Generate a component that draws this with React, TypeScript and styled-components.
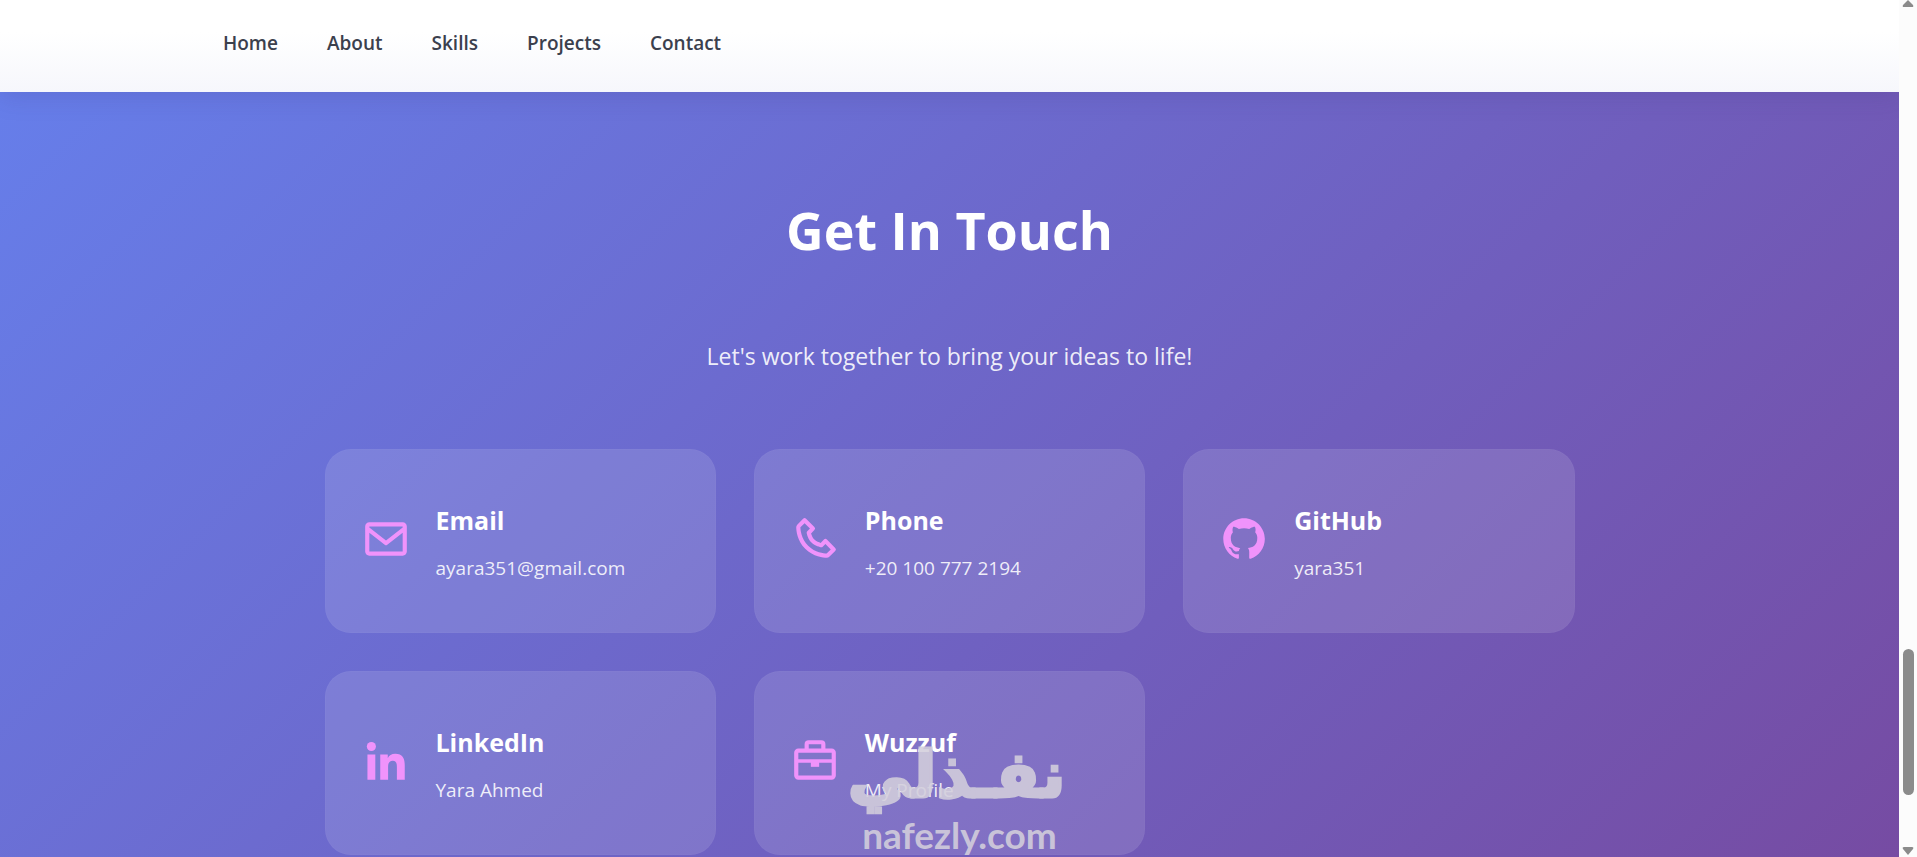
import React from 'react';
import styled, { createGlobalStyle } from 'styled-components';
import { BiEnvelope, BiPhone, BiLogoGithub, BiLogoLinkedin } from 'react-icons/bi';

const GlobalStyle = createGlobalStyle`
  * { box-sizing: border-box; margin: 0; padding: 0; }
  body { font-family: "Segoe UI", "Open Sans", "Noto Sans", sans-serif; color: #2d3142; }
`;

const Shell = styled.div`
  position: relative;
  display: flex;
  height: 100vh;
  overflow: hidden;
  background: #fff;
`;

const Page = styled.div`
  flex: 1;
  min-width: 0;
  display: flex;
  flex-direction: column;
`;

const Header = styled.header`
  position: relative;
  z-index: 1;
  flex: none;
  height: 92px;
  padding: 0 223px;
  background: linear-gradient(#fff 35%, #f6f7fc);
  box-shadow: 0 4px 24px rgba(60, 50, 120, 0.18);
`;

const Nav = styled.nav`
  display: flex;
  gap: 49px;
  padding-top: 30px;
`;

const NavLink = styled.a`
  font-size: 19px;
  line-height: 26px;
  font-weight: 600;
  color: #3b404d;
  text-decoration: none;
`;

const Contact = styled.section`
  flex: 1 0 auto;
  padding: 94px 40px 24px;
  background: linear-gradient(135deg, #667eea, #764ba2);
  color: #fff;
`;

const Title = styled.h2`
  font-size: 52px;
  line-height: 88px;
  font-weight: 700;
  text-align: center;
`;

const Lead = styled.p`
  margin: 62px 0 73px;
  font-size: 23px;
  line-height: 40px;
  text-align: center;
  color: rgba(255, 255, 255, 0.9);
`;

const Grid = styled.div`
  display: grid;
  grid-template-columns: repeat(3, 1fr);
  gap: 38px;
  max-width: 1250px;
  margin: 0 auto;
`;

const Card = styled.a`
  display: flex;
  align-items: center;
  gap: 25px;
  height: 184px;
  padding: 0 35px 4px;
  border: 1px solid rgba(255, 255, 255, 0.02);
  border-radius: 26px;
  background: rgba(255, 255, 255, 0.12);
  color: #fff;
  text-decoration: none;

  svg { flex: none; color: #f093fb; }
`;

const CardBody = styled.div`
  padding-top: 6px;
`;

const CardTitle = styled.h3`
  font-size: 25px;
  line-height: 40px;
  font-weight: 700;
  margin-bottom: 12px;
`;

const CardText = styled.p`
  font-size: 19px;
  line-height: 32px;
  color: rgba(255, 255, 255, 0.88);
`;

const ScrollBar = styled.div`
  flex: none;
  width: 18px;
  display: flex;
  flex-direction: column;
  align-items: center;
  background: #fcfcfc;
  position: relative;
  z-index: 2;
`;

const Gap = styled.div<{ $grow: number }>`
  flex: ${(p) => p.$grow} 0 0;
`;

const Thumb = styled.div`
  flex: 146 0 0;
  width: 11px;
  border-radius: 6px;
  background: #8b8b8b;
`;

const Watermark = styled.div`
  position: absolute;
  z-index: 3;
  left: 50%;
  bottom: 0;
  width: 212px;
  margin-left: -105px;
  color: #d3cfdc;
  opacity: 0.88;
  text-align: center;
  white-space: nowrap;
  pointer-events: none;
`;

const MarkArabic = styled.div`
  font: 700 64px/76px "DejaVu Sans", sans-serif;
  -webkit-text-stroke: 3px #d3cfdc;
`;

const MarkLatin = styled.div`
  font: 700 37px/44px Lato, sans-serif;
`;

function BriefcaseIcon({ size }: { size: number }) {
  return (
    <svg width={size} height={size} viewBox="0 0 24 24" fill="none" stroke="currentColor" strokeWidth="2" strokeLinejoin="round">
      <rect x="3" y="7" width="18" height="13" rx="1" />
      <path d="M8 7V4Q8 3 9 3H15Q16 3 16 4V7" />
      <path d="M3 12H21" strokeWidth="1.6" />
      <path d="M10 12H14V14.8H10Z" fill="currentColor" stroke="none" />
    </svg>
  );
}

const links = ['Home', 'About', 'Skills', 'Projects', 'Contact'];

const contacts: { icon: React.ComponentType<{ size: number }>; title: string; text: string; href: string }[] = [
  { icon: BiEnvelope, title: 'Email', text: 'ayara351@gmail.com', href: 'mailto:ayara351@gmail.com' },
  { icon: BiPhone, title: 'Phone', text: '+20 100 777 2194', href: 'tel:+201007772194' },
  { icon: BiLogoGithub, title: 'GitHub', text: 'yara351', href: '#github' },
  { icon: BiLogoLinkedin, title: 'LinkedIn', text: 'Yara Ahmed', href: '#linkedin' },
  { icon: BriefcaseIcon, title: 'Wuzzuf', text: 'My Profile', href: '#wuzzuf' },
];

export default function App() {
  return (
    <Shell>
      <GlobalStyle />
      <Page>
        <Header>
          <Nav>
            {links.map((l) => (
              <NavLink key={l} href={`#${l.toLowerCase()}`}>{l}</NavLink>
            ))}
          </Nav>
        </Header>
        <Contact id="contact">
          <Title>Get In Touch</Title>
          <Lead>Let's work together to bring your ideas to life!</Lead>
          <Grid>
            {contacts.map(({ icon: Icon, title, text, href }) => (
              <Card key={title} href={href}>
                <Icon size={50} />
                <CardBody>
                  <CardTitle>{title}</CardTitle>
                  <CardText>{text}</CardText>
                </CardBody>
              </Card>
            ))}
          </Grid>
        </Contact>
      </Page>
      <ScrollBar aria-hidden="true">
        <svg width="14" height="8"><path d="M7 0L12 5Q13 7 11 7H3Q1 7 2 5Z" fill="#8b8b8b" /></svg>
        <Gap $grow={641} />
        <Thumb />
        <Gap $grow={51} />
        <svg width="14" height="11"><path d="M7 9L2 3Q1 1 3 1H11Q13 1 12 3Z" fill="#8b8b8b" /></svg>
      </ScrollBar>
      <Watermark>
        <MarkArabic lang="ar" dir="rtl">نفـذلي</MarkArabic>
        <MarkLatin>nafezly.com</MarkLatin>
      </Watermark>
    </Shell>
  );
}
